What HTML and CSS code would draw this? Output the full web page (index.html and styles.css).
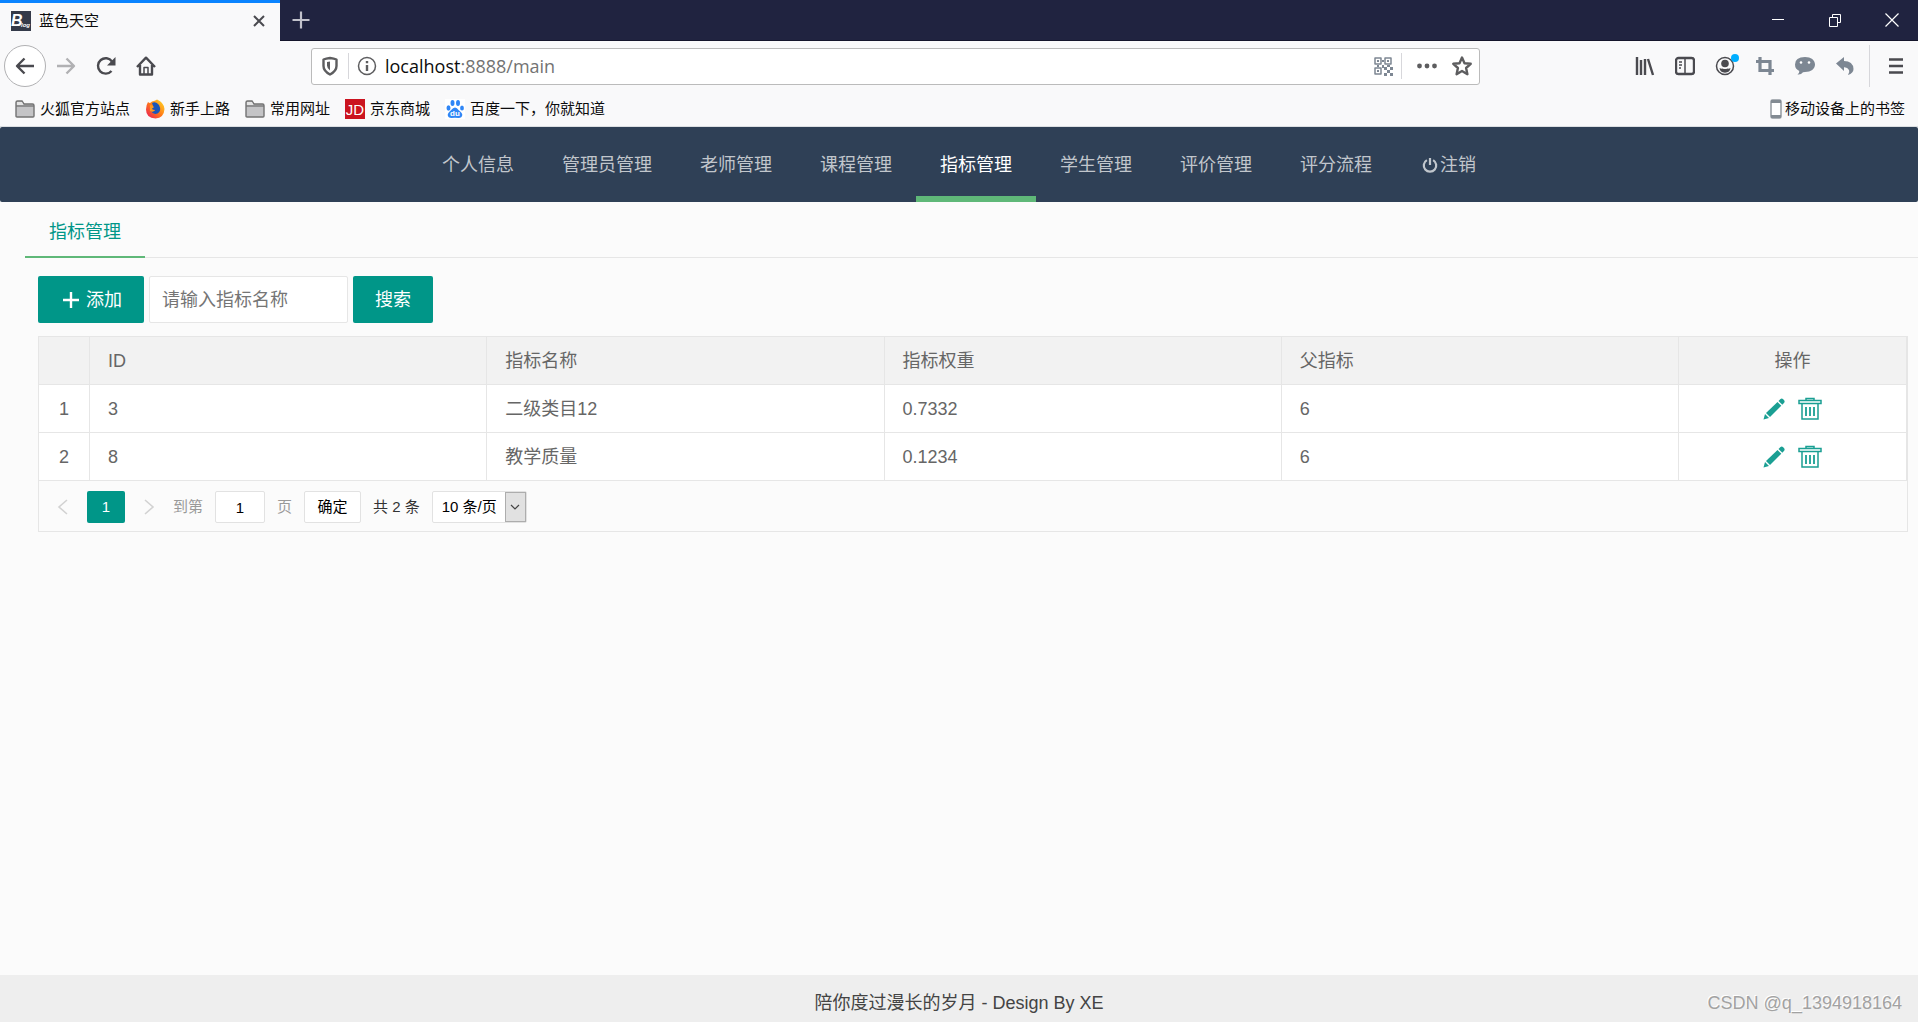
FILE: index.html
```html
<!DOCTYPE html>
<html lang="zh-CN">
<head>
<meta charset="utf-8">
<title>蓝色天空</title>
<link rel="stylesheet" href="styles.css">
</head>
<body>
<svg class="defs" aria-hidden="true">
  <symbol id="folder" viewBox="0 0 20 20"><path d="M1 17V3.500Q1 2 2.500 2H7l2 3h8.500Q19 5 19 6.500V17Q19 18 18 18H2Q1 18 1 17z" fill="#c4c4c6" stroke="#737373" stroke-width="1.400"/><path d="M1 7h18" stroke="#737373" stroke-width="1.300"/><path d="M2 3h5l1.500 3H2z" fill="#e4e4e4"/></symbol>
  <symbol id="pencil" viewBox="0 0 22 22"><path d="M0.500 21.500 2 16l4 4z"/><path d="M3 15 14.500 4l3.800 3.800L7 19z"/><path d="M15.500 3 17.500 1q1.300-1 2.700.300l.700.700q1.300 1.500.300 2.700L19.300 6.800z"/></symbol>
  <symbol id="trash" viewBox="0 0 24 24"><path d="M1 3.500h22v3H1zM8 3.500V1.500h8v2M4 7v15h16V7" fill="none" stroke="currentColor" stroke-width="1.500"/><path d="M8 10v9M12 10v9M16 10v9" stroke="currentColor" stroke-width="1.800"/></symbol>
</svg>

<header class="browser">
  <div class="titlebar">
    <div class="tab">
      <svg class="i20" viewBox="0 0 20 20"><path d="M0 0h20v20H0z" fill="#343a49"/><text x="0" y="15" class="blog-b">B</text><text x="10" y="16" class="blog-s">log</text></svg>
      <span class="tab-title">蓝色天空</span>
      <button class="plain" aria-label="关闭标签页"><svg class="i12" viewBox="0 0 12 12"><path d="M1 1l10 10M11 1 1 11" stroke="#4a4a4f" stroke-width="2"/></svg></button>
    </div>
    <button class="plain new-tab" aria-label="新标签页"><svg class="i20" viewBox="0 0 20 20"><path d="M10 1.500v17M1.500 10h17" stroke="#c2c2cc" stroke-width="2.200"/></svg></button>
    <div class="window-controls">
      <button class="plain" aria-label="最小化"><svg class="i14" viewBox="0 0 14 14"><path d="M1 6.500h12" stroke="#fff"/></svg></button>
      <button class="plain" aria-label="还原"><svg class="i14" viewBox="0 0 14 14"><path d="M1.500 4.500h8v9h-8zM4.500 4.500v-3h8v8h-3" fill="none" stroke="#fff"/></svg></button>
      <button class="plain" aria-label="关闭"><svg class="i14" viewBox="0 0 14 14"><path d="M.5.500l13 13M13.500.500l-13 13" stroke="#fff" stroke-width="1.200"/></svg></button>
    </div>
  </div>

  <div class="toolbar">
    <div class="nav-buttons">
      <button class="plain back" aria-label="后退"><svg class="i20" viewBox="0 0 20 20"><path d="M19 10H2M9.500 2.500 2 10l7.500 7.500" class="line"/></svg></button>
      <button class="plain muted" aria-label="前进"><svg class="i20" viewBox="0 0 20 20"><path d="M1 10h17M10.500 2.500 18 10l-7.500 7.500" class="line"/></svg></button>
      <button class="plain" aria-label="刷新"><svg class="i20" viewBox="0 0 20 20"><path d="M15.500 15A7.700 7.700 0 1 1 16 5.500" class="line"/><path d="M19.500 1v8.500H11z" fill="currentColor"/></svg></button>
      <button class="plain" aria-label="主页"><svg class="i20" viewBox="0 0 20 20"><path d="M1 11 10 1.700 19 11M4 9v9.500h12V9" class="line"/><path d="M8 18v-6.500h4V18" class="thin"/></svg></button>
    </div>
    <div class="urlbar">
      <svg class="i20" viewBox="0 0 20 20"><path d="M10 2q4 .500 6.500 1.500V10q0 5-6.500 8.500Q3.500 15 3.500 10V3.500Q6 2.500 10 2z" class="line"/><path d="M10 5.500v9q-3-2-3-5V6z" fill="currentColor"/></svg>
      <span class="rule"></span>
      <svg class="i20 info" viewBox="0 0 20 20"><circle cx="10" cy="10" r="8.500" class="thin"/><path d="M10 9v6M10 5v2.200" class="line"/></svg>
      <div class="address">localhost<span>:8888/main</span></div>
      <svg class="i20 slate" viewBox="0 0 20 20"><path d="M2 2h6v6H2zM12 2h6v6h-6zM2 12h6v6H2z" class="qr"/><path d="M4 4h2v2H4zM14 4h2v2h-2zM4 14h2v2H4zM9 4h2v2H9zM9 9h2v3H9zM4 9h2v2H4zM14 9h3v2h-3zM11 11h3v3h-3zM17 11h3v3h-3zM14 14h3v3h-3zM11 17h3v3h-3zM17 17h3v3h-3z" fill="currentColor"/></svg>
      <span class="rule"></span>
      <button class="plain dots" aria-label="页面操作"><svg class="i20" viewBox="0 0 20 20"><g fill="#5d5d5f"><circle cx="2.500" cy="10" r="2.400"/><circle cx="10" cy="10" r="2.400"/><circle cx="17.500" cy="10" r="2.400"/></g></svg></button>
      <button class="plain" aria-label="加入书签"><svg class="i20" viewBox="0 0 20 20"><path d="m10 1.500 2.500 5.700 6.200.600-4.600 4.200 1.300 6.200L10 15l-5.400 3.200L5.900 12 1.300 7.800l6.200-.600z" class="line"/></svg></button>
    </div>
    <div class="tools">
      <button class="plain" aria-label="书库"><svg class="i20" viewBox="0 0 20 20"><path d="M2 1v18M6 4v15M10 3v16M13 3l5 16" class="line"/></svg></button>
      <button class="plain" aria-label="侧栏"><svg class="i20" viewBox="0 0 20 20"><rect x="1" y="2" width="18" height="16" rx="2.500" class="line"/><path d="M10 2v16M4 6h3M4 9h3M4 12h2" class="thin"/></svg></button>
      <button class="plain" aria-label="账户"><svg class="i28" viewBox="0 0 28 28"><circle cx="14" cy="14" r="8.500" class="thin"/><circle cx="14" cy="11.500" r="3.800" fill="currentColor"/><path d="M8.500 16q2 1 3 .500 2.500 1 5 0 1 .500 3-.500-.500 4.500-5.500 4.700-5-.200-5.500-4.700z" fill="currentColor"/><circle cx="24" cy="6" r="4" fill="#00aeff"/></svg></button>
      <button class="plain slate" aria-label="截图"><svg class="i20" viewBox="0 0 20 20"><path d="M5 1v13.500h14M1 5.500h14V19" class="thick"/></svg></button>
      <button class="plain slate" aria-label="聊天"><svg class="i20" viewBox="0 0 20 20"><path d="M10 1c6 0 10 3 10 7.500S16 16 10 16l-2 .200Q6 19 2.500 18.500 4.500 17 4.300 15 0 13 0 8.500 0 1 10 1z" fill="currentColor"/><circle cx="6" cy="6.500" r="1.300" fill="#fff"/><circle cx="14" cy="6.500" r="1.300" fill="#fff"/></svg></button>
      <button class="plain slate" aria-label="撤销"><svg class="i20" viewBox="0 0 20 20"><path d="M1 7.500 9 1v4q9 0 9.500 8 0 4-5.500 6 2-3 1-5-1.500-3-5-2.800V15z" fill="currentColor"/></svg></button>
      <span class="rule tall"></span>
      <button class="plain" aria-label="菜单"><svg class="i20" viewBox="0 0 20 20"><path d="M3 3.500h14M3 10h14M3 16.500h14" class="line"/></svg></button>
    </div>
  </div>

  <nav class="bookmarks">
    <a href="#"><svg class="i20"><use href="#folder"/></svg>火狐官方站点</a>
    <a href="#"><svg class="i20" viewBox="0 0 20 20"><defs><linearGradient id="fox" x1="1" y1="0" x2="0" y2="1"><stop offset="0" stop-color="#ffe226"/><stop offset=".5" stop-color="#ff7a18"/><stop offset="1" stop-color="#e8125c"/></linearGradient></defs><path d="M3 3q1 1 2 1 2-2 4-2 2-1 3-1.500 7 3 7.500 9.500-.500 9-9 9.500Q1 19 1 10.500 1 6 3 3z" fill="url(#fox)"/><path d="M7 4q4-2 7 2 3 6-1.500 8.500Q8 16 6 12q3 1 4-1-3 0-4-2l2-2z" fill="#1b56b8"/><path d="M5 6q3 0 4 2-1 1-2 1.500 0 1.500 3 1.500-2 3-5 1z" fill="#ff9a1e"/></svg>新手上路</a>
    <a href="#"><svg class="i20"><use href="#folder"/></svg>常用网址</a>
    <a href="#"><svg class="i20" viewBox="0 0 20 20"><path d="M0 0h20v20H0z" fill="#cb1420"/><text x="10" y="16" class="jd">JD</text></svg>京东商城</a>
    <a href="#"><svg class="i20" viewBox="0 0 20 20"><path d="M0 0h20v20H0z" fill="#fff"/><g fill="#2f86f6"><ellipse cx="3.500" cy="9" rx="2" ry="2.700"/><ellipse cx="7.500" cy="4" rx="2" ry="2.900"/><ellipse cx="13" cy="4" rx="2" ry="2.900"/><ellipse cx="17" cy="9" rx="1.900" ry="2.600"/><path d="M10 8.500q2 0 3.500 2.500 4 3 3.800 5-.300 3-3.800 3-3.500-.500-7 0-3.500 0-3.800-3 0-2 3.500-5Q8 8.500 10 8.500z"/></g><text x="10" y="17" class="du">du</text></svg>百度一下，你就知道</a>
    <a href="#" class="mobile"><svg class="phone" viewBox="0 0 12 20"><rect x="1" y="1" width="10" height="18" rx="1.500" fill="#fff" stroke="#9299a0" stroke-width="1.500"/><path d="M1 1h10v3H1zM1 16h10v3H1z" fill="#838b93"/></svg>移动设备上的书签</a>
  </nav>
</header>

<nav class="site-nav">
  <a href="#">个人信息</a>
  <a href="#">管理员管理</a>
  <a href="#">老师管理</a>
  <a href="#">课程管理</a>
  <a href="#" class="active" aria-current="page">指标管理</a>
  <a href="#">学生管理</a>
  <a href="#">评价管理</a>
  <a href="#">评分流程</a>
  <a href="#"><svg class="power" viewBox="0 0 18 18"><path d="M5.500 3.500a7 7 0 1 0 7 0M9 1v8" fill="none" stroke="currentColor" stroke-width="2.500"/></svg>注销</a>
</nav>

<main>
  <div class="page-tabs"><a href="#" class="page-tab">指标管理</a></div>
  <section class="content">
    <form class="search" onsubmit="return false">
      <button type="button" class="btn add"><svg class="i16" viewBox="0 0 16 16"><path d="M8 0v16M0 8h16" stroke="#fff" stroke-width="2.400"/></svg>添加</button>
      <input type="text" placeholder="请输入指标名称" aria-label="指标名称">
      <button class="btn">搜索</button>
    </form>
    <div class="grid">
      <table>
        <colgroup><col class="c-num"><col><col><col><col><col class="c-act"></colgroup>
        <thead><tr><th></th><th>ID</th><th>指标名称</th><th>指标权重</th><th>父指标</th><th>操作</th></tr></thead>
        <tbody>
          <tr><td>1</td><td>3</td><td>二级类目12</td><td>0.7332</td><td>6</td><td><div class="actions"><button class="plain" aria-label="编辑"><svg class="i22"><use href="#pencil"/></svg></button><button class="plain" aria-label="删除"><svg class="i24"><use href="#trash"/></svg></button></div></td></tr>
          <tr><td>2</td><td>8</td><td>教学质量</td><td>0.1234</td><td>6</td><td><div class="actions"><button class="plain" aria-label="编辑"><svg class="i22"><use href="#pencil"/></svg></button><button class="plain" aria-label="删除"><svg class="i24"><use href="#trash"/></svg></button></div></td></tr>
        </tbody>
      </table>
      <div class="pager">
        <button class="plain arrow" aria-label="上一页"><svg class="i16" viewBox="0 0 16 16"><path d="M12 1 4 8l8 7" class="chev"/></svg></button>
        <button class="plain current">1</button>
        <button class="plain arrow" aria-label="下一页"><svg class="i16" viewBox="0 0 16 16"><path d="m4 1 8 7-8 7" class="chev"/></svg></button>
        <label for="page">到第</label>
        <input id="page" type="text" value="1">
        <span class="unit">页</span>
        <button class="confirm">确定</button>
        <span class="total">共 2 条</span>
        <div class="size">
          <select aria-label="每页条数"><option>10 条/页</option><option>20 条/页</option></select>
          <span class="drop"><svg class="i12" viewBox="0 0 12 12"><path d="m2 4 4 4 4-4" fill="none" stroke="#444" stroke-width="1.200"/></svg></span>
        </div>
      </div>
    </div>
  </section>
</main>

<footer>
  <p>陪你度过漫长的岁月 - Design By XE</p>
  <span class="watermark">CSDN @q_1394918164</span>
</footer>
</body>
</html>
```

FILE: styles.css
```css
* { box-sizing: border-box; }

body {
  margin: 0;
  min-height: 100vh;
  display: flex;
  flex-direction: column;
  background: #fbfbfb;
  color: #333;
  font: 18px/24px "Liberation Sans", "Noto Sans CJK SC", sans-serif;
}

a { color: inherit; text-decoration: none; }
button, input, select { font: inherit; color: inherit; margin: 0; }
svg { display: block; flex: none; }
.defs { position: absolute; width: 0; height: 0; }

.plain {
  border: 0;
  padding: 0;
  background: none;
  display: flex;
  align-items: center;
  justify-content: center;
}

.i12 { width: 12px; height: 12px; }
.i14 { width: 14px; height: 14px; }
.i16 { width: 16px; height: 16px; }
.i20 { width: 20px; height: 20px; }
.i22 { width: 22px; height: 22px; }
.i24 { width: 24px; height: 24px; }
.i28 { width: 28px; height: 28px; }
.line, .thin, .thick, .qr { fill: none; stroke: currentColor; stroke-width: 2.4; stroke-linejoin: round; }
.thin, .qr { stroke-width: 1.5; }
.thick { stroke-width: 3.2; stroke-linejoin: miter; }
.slate { color: #7d8793; }

/* browser chrome */
.browser { background: #f9f9fa; color: #4a4a4f; border-bottom: 1px solid #dcdfe2; }

.titlebar { display: flex; height: 41px; background: #202340; border-bottom: 1px solid #14152b; }
.tab {
  display: flex;
  align-items: center;
  gap: 8px;
  width: 280px;
  height: 41px;
  padding: 0 15px 2px 11px;
  background: #f9f9fa;
  border-top: 3px solid #0a84ff;
}
.tab-title { flex: 1; color: #0c0c0d; font-size: 15px; }
.new-tab { width: 42px; }
.window-controls { display: flex; margin: 0 -2px 0 auto; overflow: hidden; }
.window-controls button { width: 57px; }
.blog-b { font: italic bold 16px "Liberation Sans", sans-serif; fill: #fff; }
.blog-s { font: italic bold 6px "Liberation Sans", sans-serif; fill: #fff; }

.toolbar { display: flex; align-items: center; height: 51px; padding: 0 12px 1px 4px; }
.nav-buttons { display: flex; align-items: center; gap: 20px; flex: 0 1 307px; }
.back { width: 42px; height: 42px; border: 1px solid #b1b1b3; border-radius: 50%; background: #fff; }
.muted { color: #b1b1b3; }
.nav-buttons .muted { margin-left: -10px; }
.urlbar {
  flex: 1;
  display: flex;
  align-items: center;
  gap: 8px;
  height: 37px;
  padding: 0 7px 0 8px;
  background: #fff;
  border: 1px solid #bbb;
  border-radius: 3px;
  color: #5d5d5f;
}
.urlbar .slate { color: #7d8793; }
.rule { width: 1px; height: 26px; background: #d7d7db; }
.rule.tall { height: 42px; }
.address { flex: 1; color: #0c0c0d; font: 18px/24px "Open Sans", "Noto Sans", sans-serif; }
.address span { color: #737373; }
.dots { margin: 0 7px; }
.tools { display: flex; align-items: center; justify-content: flex-end; gap: 20px; flex: 0 1 426px; }
.tools .i28 { margin: 0 -4px; }
.tools .rule { margin: 0 -6px; }
.tools button:last-child { margin-left: 2px; }

.bookmarks { display: flex; align-items: center; gap: 15px; height: 34px; padding: 0 13px 0 15px; color: #0c0c0d; font-size: 15px; }
.bookmarks a { display: flex; align-items: center; gap: 5px; }
.bookmarks .mobile { margin-left: auto; gap: 3px; }
.phone { width: 12px; height: 20px; }
.jd { font: 15px "Liberation Sans", sans-serif; fill: #fff; text-anchor: middle; }
.du { font: bold 8px "Liberation Sans", sans-serif; fill: #fff; text-anchor: middle; }

/* site navigation */
.site-nav { display: flex; justify-content: center; height: 75px; background: #2f4056; border-radius: 2px; color: #c1c6cc; }
.site-nav a { display: flex; align-items: center; gap: 2px; padding: 0 24px; border-bottom: 6px solid transparent; border-top: 6px solid transparent; }
.site-nav .active { color: #fff; border-bottom-color: #5fb878; }
.site-nav a:last-child { padding-left: 26px; }
.power { width: 16px; height: 16px; }

/* page */
main { flex: 1; }
.page-tabs { display: flex; height: 56px; margin-left: 25px; border-bottom: 1px solid #e6e6e6; }
.page-tab { height: 56px; padding: 18px 24px 0; color: #009688; border-bottom: 2px solid #5fb878; }
.content { padding: 18px 10px 0 38px; }
.search { display: flex; gap: 5px; margin-bottom: 13px; }
.btn { display: flex; align-items: center; gap: 7px; height: 47px; padding: 0 22px; border: 0; border-radius: 2px; background: #009688; color: #fff; }
.add { padding: 0 22px 0 25px; }
.search input { width: 199px; padding: 0 12px; border: 1px solid #e6e6e6; border-radius: 2px; background: #fff; }
.search input::placeholder { color: #757575; opacity: 1; }

.grid { border: 1px solid #e6e6e6; }
table { width: 100%; table-layout: fixed; border-collapse: separate; border-spacing: 0; color: #666; }
.c-num { width: 51px; }
.c-act { width: 228px; }
th, td { height: 48px; padding: 0 18px; border: solid #e6e6e6; border-width: 0 1px 1px 0; text-align: left; font-weight: 400; }
th { background: #f2f2f2; }
td { background: #fff; }
th:first-child, td:first-child { padding: 0; text-align: center; }
th:last-child { text-align: center; }
.actions { display: flex; justify-content: center; gap: 13px; color: #1a9f93; fill: currentColor; }
.actions button { color: inherit; }

.pager { display: flex; align-items: center; height: 50px; padding: 2px 0 0 16px; font-size: 15px; color: #999; }
.arrow { width: 16px; color: #d2d2d2; }
.chev { fill: none; stroke: currentColor; stroke-width: 1.6; }
.current { width: 38px; height: 32px; margin: 0 16px; border-radius: 2px; background: #009688; color: #fff; }
.pager label { margin: 0 12px 0 16px; }
.pager input { width: 50px; height: 32px; padding: 0; border: 1px solid #e2e2e2; border-radius: 2px; background: #fff; color: #000; text-align: center; }
.unit { margin: 0 12px; }
.confirm { width: 57px; height: 32px; padding: 0; border: 1px solid #e2e2e2; border-radius: 2px; background: #fff; color: #000; }
.total { margin: 0 12px; color: #333; }
.size { display: flex; width: 95px; height: 32px; border: 1px solid #e2e2e2; border-radius: 2px; background: #fff; }
.size select { flex: 1; min-width: 0; padding: 0 0 0 9px; border: 0; background: none; color: #000; appearance: none; }
.drop { display: flex; align-items: center; justify-content: center; width: 21px; background: #e1e1e1; border: 1px solid #adadad; pointer-events: none; }

footer { display: grid; grid-template-columns: 1fr auto 1fr; align-items: center; height: 47px; padding-top: 8px; background: #eee; color: #444; }
footer p { grid-column: 2; margin: 0; }
.watermark { justify-self: end; margin-right: 16px; color: #a2a2a2; text-shadow: -1px -1px 0 #fff; }
```
